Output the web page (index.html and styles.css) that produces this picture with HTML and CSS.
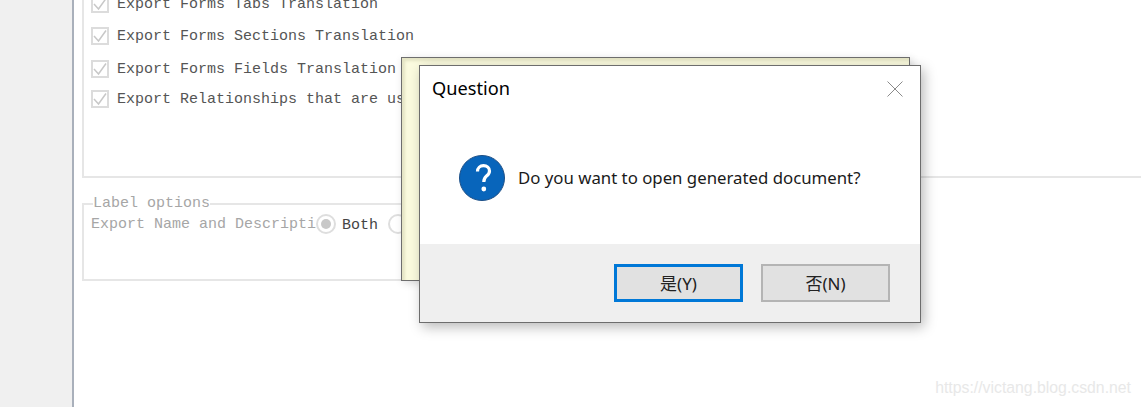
FILE: index.html
```html
<!DOCTYPE html>
<html lang="en">
<head>
	<meta charset="UTF-8">
	<title>Question</title>
	<link rel="stylesheet" href="styles.css">
</head>
<body>
	<div class="sidebar"></div>
	<div class="main">
		<div class="group-top">
			<div class="check-row row-tabs">
				<span class="check"><svg viewBox="0 0 18 18" width="18" height="18"><path d="M3 9l4.500 5L15 3.500" fill="none" stroke="#c8c8c8" stroke-width="1.500"/></svg></span>
				<span>Export Forms Tabs Translation</span>
			</div>
			<div class="check-row row-sections">
				<span class="check"><svg viewBox="0 0 18 18" width="18" height="18"><path d="M3 9l4.500 5L15 3.500" fill="none" stroke="#c8c8c8" stroke-width="1.500"/></svg></span>
				<span>Export Forms Sections Translation</span>
			</div>
			<div class="check-row row-fields">
				<span class="check"><svg viewBox="0 0 18 18" width="18" height="18"><path d="M3 9l4.500 5L15 3.500" fill="none" stroke="#c8c8c8" stroke-width="1.500"/></svg></span>
				<span>Export Forms Fields Translation</span>
			</div>
			<div class="check-row row-rel">
				<span class="check"><svg viewBox="0 0 18 18" width="18" height="18"><path d="M3 9l4.500 5L15 3.500" fill="none" stroke="#c8c8c8" stroke-width="1.500"/></svg></span>
				<span>Export Relationships that are us</span>
			</div>
		</div>
		<fieldset class="group-label">
			<legend>Label options</legend>
			<div class="label-row">
				<span class="label-name">Export Name and Descripti</span>
				<span class="radio radio-on"></span>
				<span class="both">Both</span>
				<span class="radio"></span>
			</div>
		</fieldset>
	</div>

	<div class="note"></div>

	<div class="dialog">
		<div class="dialog-body">
			<div class="dialog-title">
				<span>Question</span>
				<svg class="close" viewBox="0 0 16 16" width="16" height="16"><path d="M.5.5l15 15M15.500.5l-15 15" fill="none" stroke="#8a8a8a" stroke-width="1"/></svg>
			</div>
			<div class="dialog-msg">
				<svg class="qicon" viewBox="0 0 46 46" width="46" height="46">
					<circle cx="23" cy="23" r="22.500" fill="#0865bb" stroke="#1d4f86" stroke-width="1"/>
					<path d="M18.500 16.500c0-3.500 2.500-5.800 6-5.800s6 2.200 6 5.200c0 2.500-1.300 3.800-3 5.200-1.800 1.500-2.700 2.800-2.700 6" fill="none" stroke="#fff" stroke-width="3.200"/>
					<circle cx="24.800" cy="34" r="2.400" fill="#fff"/>
				</svg>
				<span class="msg-text">Do you want to open generated document?</span>
			</div>
		</div>
		<div class="dialog-foot">
			<div class="btn btn-default">是(Y)</div>
			<div class="btn">否(N)</div>
		</div>
	</div>

	<div class="watermark">https://victang.blog.csdn.net</div>
</body>
</html>
```

FILE: styles.css
```css
html, body {
	margin: 0;
	height: 100%;
}
body {
	width: 1141px;
	height: 407px;
	overflow: hidden;
	position: relative;
	display: flex;
	background: #fff;
	font-family: "Liberation Mono", "Noto Sans CJK SC", monospace;
	font-size: 15px;
	color: #555;
}
.sidebar {
	width: 72px;
	flex: none;
	background: #f0f0f0;
	border-right: 2px solid #a9b0bb;
}
.main {
	flex: 1;
	padding-left: 8px;
}
.group-top {
	height: 186px;
	margin-top: -8px;
	border: 2px solid #e6e6e6;
	border-top: 0;
	border-right: 0;
	padding-left: 7px;
	box-sizing: border-box;
	padding-top: 2px;
}
.check-row {
	display: flex;
	align-items: center;
	gap: 8px;
	height: 20px;
}
.row-sections { margin-top: 12px; }
.row-fields { margin-top: 13px; }
.row-rel { margin-top: 10px; }
.check {
	width: 18px;
	height: 18px;
	box-sizing: border-box;
	border: 2px solid #dcdcdc;
	display: flex;
	align-items: center;
	justify-content: center;
}
.check svg {
	flex: none;
}
.group-label {
	width: 500px;
	height: 85px;
	box-sizing: border-box;
	margin: 18px 0 0;
	padding: 0 0 0 7px;
	border: 2px solid #e6e6e6;
	color: #a6a6a6;
}
.group-label legend {
	padding: 0;
	margin-left: 2px;
	line-height: 16px;
}
.label-row {
	display: flex;
	align-items: center;
	height: 22px;
	margin-top: 1px;
}
.label-name {
	width: 225px;
	white-space: nowrap;
	flex: none;
}
.radio {
	width: 20px;
	height: 20px;
	box-sizing: border-box;
	border: 2px solid #dedede;
	border-radius: 50%;
	flex: none;
	display: flex;
	align-items: center;
	justify-content: center;
}
.radio-on::after {
	content: "";
	width: 10px;
	height: 10px;
	border-radius: 50%;
	background: #c8c8c8;
}
.both {
	margin: 2px 10px 0 6px;
	color: #444;
}

/* floating windows */
.note {
	position: absolute;
	left: 401px;
	top: 57px;
	width: 509px;
	height: 224px;
	box-sizing: border-box;
	background: #fbfbdf;
	border: 1px solid #6e6e6e;
	box-shadow: inset 3px 3px 3px #e4e4c4, 2px 2px 8px rgba(0, 0, 0, .15);
}
.dialog {
	position: absolute;
	left: 419px;
	top: 65px;
	width: 502px;
	height: 258px;
	box-sizing: border-box;
	border: 1px solid #6d6d6d;
	background: #fff;
	box-shadow: 3px 4px 12px rgba(0, 0, 0, .28);
	display: flex;
	flex-direction: column;
	font-family: "Noto Sans", "Noto Sans CJK SC", sans-serif;
	color: #000;
}
.dialog-body {
	flex: 1;
}
.dialog-title {
	display: flex;
	justify-content: space-between;
	align-items: center;
	padding: 8px 17px 0 12px;
	font-size: 18.200px;
	line-height: 29px;
}
.dialog-msg {
	display: flex;
	align-items: center;
	gap: 13px;
	padding: 52px 0 0 39px;
	font-size: 16.800px;
	color: #1a1a1a;
}
.msg-text {
	padding-bottom: 2px;
}
.dialog-foot {
	height: 78px;
	box-sizing: border-box;
	background: #efefef;
	display: flex;
	justify-content: flex-end;
	gap: 18px;
	padding: 20px 30px 0 0;
}
.btn {
	width: 129px;
	height: 38px;
	box-sizing: border-box;
	background: #e1e1e1;
	border: 2px solid #b4b4b4;
	padding-bottom: 2px;
	display: flex;
	align-items: center;
	justify-content: center;
	font-size: 17px;
	color: #222;
}
.btn-default {
	border: 3px solid #0078d7;
}
.watermark {
	position: absolute;
	right: 10px;
	top: 379px;
	font-family: "Liberation Sans", sans-serif;
	font-size: 15.800px;
	color: #e8e8e8;
}
```
